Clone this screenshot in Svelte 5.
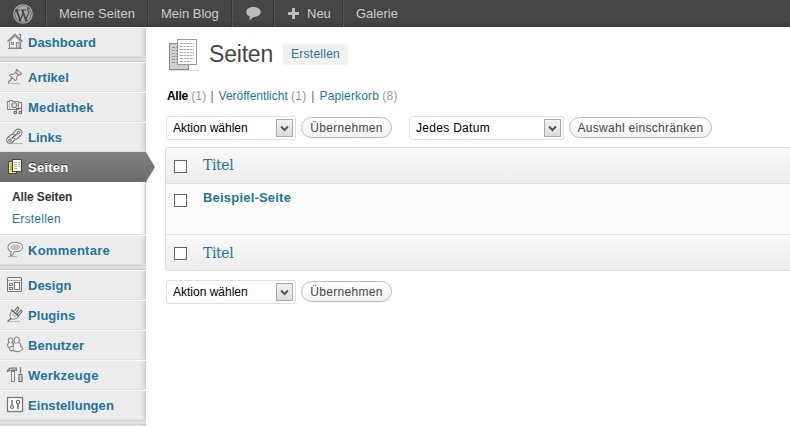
<script>
  const groups = [
    [{ id: 'home', label: 'Dashboard' }],
    [
      { id: 'pin', label: 'Artikel' },
      { id: 'media', label: 'Mediathek' },
      { id: 'link', label: 'Links' },
      { id: 'pages', label: 'Seiten', current: true, children: ['Alle Seiten', 'Erstellen'] },
      { id: 'comment', label: 'Kommentare' },
    ],
    [
      { id: 'design', label: 'Design' },
      { id: 'plug', label: 'Plugins' },
      { id: 'users', label: 'Benutzer' },
      { id: 'tools', label: 'Werkzeuge' },
      { id: 'settings', label: 'Einstellungen' },
    ],
  ];
</script>

{#snippet icon(id)}
  <svg class="icon" width="18" height="18" viewBox="0 0 18 18" fill="none" stroke="#888" stroke-width="1.1">
    {#if id === 'home'}
      <path d="M3.500 9v7h11V9L9 3.500z" fill="#f4f4f4" />
      <path d="M1.500 9.500 9 2.200l7.500 7.300M12.500 2.500h2v4" stroke="#777" />
      <path d="M3 10 9 4.200l6 5.800" stroke="#aaa" />
      <path d="M5.500 10.500h2v2h-2zM10.500 16v-5.500H13V16" />
      <path d="M2 16.500h14" />
    {:else if id === 'pin'}
      <path d="M2 16.500h12" stroke="#bbb" />
      <path d="m10.500 2.500 5 4-1 1.300-1.500-.3-2.500 2.700.3 2.300-1.500 1-5.500-5 1.200-1.300 2.500.2L10 4.800z" fill="#eee" />
      <path d="M6.200 11 2 15.500M9.500 5.500l3.500 3" stroke="#777" />
    {:else if id === 'media'}
      <path d="M1.500 4.500h2v-1h3v1h6v8h-11z" fill="#f3f3f3" />
      <circle cx="8.300" cy="8.300" r="2.500" fill="#ddd" stroke="#777" />
      <path d="M3.500 5v7" stroke="#bbb" />
      <path d="M10.500 15v-3.500h5M15.500 5.500V15M13 5.500h3" stroke="#777" />
      <circle cx="9.300" cy="15.500" r="1.300" fill="#ddd" stroke="#666" />
      <circle cx="14.300" cy="15.500" r="1.300" fill="#ddd" stroke="#666" />
    {:else if id === 'link'}
      <path d="M3 16.500h14" stroke="#bbb" />
      <g fill="#f4f4f4" stroke="#777">
        <circle cx="12.300" cy="5.700" r="3.600" />
        <circle cx="4" cy="13" r="3.300" />
        <path d="m7.500 6.500 2-2 3.500 4-2 2zM4 9.500l2-1.500 3 3.500-2.500 2.500z" stroke="none" />
        <path d="m8.900 4.500-2 2.200M14.500 8.700l-3 2.800c-1.500 1-3 .5-3.500-.5M2 10.500l3-2.800c1.500-1 3-.5 3.500.5M6.500 15.300l2.400-2.600" />
        <circle cx="12.500" cy="5.500" r="1.300" />
        <circle cx="4" cy="13.200" r="1.200" />
        <path d="m5.700 11.600 5.300-5" stroke-width="1.700" />
      </g>
    {:else if id === 'pages'}
      <path d="M2.500 4.500h8v12h-8z" fill="#eadf8c" stroke="#4b4639" />
      <path d="M4 7h2M4 9h2M4 11h2M4 13h2" stroke="#a69949" />
      <path d="M6.500 2.500h9v12h-9z" fill="#fffbe5" stroke="#4b4639" />
      <path d="M8 5.500h6M8 7.500h6M8 9.500h6M8 11.500h4" stroke="#b5ae88" stroke-dasharray="3 1" />
    {:else if id === 'comment'}
      <path d="M2 16.500h9" stroke="#bbb" />
      <path d="M9.300 2.500c-4.300 0-7.300 1.700-7.300 4.700 0 2.300 1.400 3.900 3.200 4.400L4.500 16c2-.5 3.500-2 4-4.300 5 0 8-1.500 8-4.500s-3-4.700-7.200-4.700z" fill="#fafafa" />
      <path d="M9.300 4.300c-3.300 0-5.300 1-5.300 2.900S6 10 9.300 10s5.200-1 5.200-2.800-2-2.900-5.200-2.900z" fill="#c4c4c4" stroke="none" />
    {:else if id === 'design'}
      <rect x="1.500" y="2.500" width="14" height="14" rx="1" fill="#f4f4f4" stroke="#777" />
      <path d="M2 5.500h13" stroke="#aaa" />
      <path d="M3.500 8.500h3v2h-3zM3.500 12.500h3v2h-3zM8.500 7.500h5v7h-5z" fill="#fff" stroke="#777" />
    {:else if id === 'plug'}
      <path d="M2 16.500h12" stroke="#bbb" />
      <path d="m6 5.500 6.500 6C10.500 14 7 15 5 13.500S4 8 6 5.500z" fill="#f5f5f5" />
      <path d="m5.500 4.500 7.500 7M5 13.500 1.500 16.500M8.500 6l3-4 1.500 1.200-2.700 4.200M11.300 9.200 15 5l1.200 1.500-3.500 4" stroke="#666" />
      <path d="m6.500 9 3 3" stroke="#aaa" />
    {:else if id === 'users'}
      <g fill="#f5f5f5" stroke="#808080">
        <path d="M7 12.500H3C.8 11 1.200 8.500 3.200 7.500c-1.700-1.700-.8-4.500 1.300-4.500s3.100 2.800 1.400 4.500c1.300.5 1.700 2 1.500 4z" />
        <path d="M7.500 9c0-1 .6-1.500 1-1.800C7.700 5 8.500 2 10.700 2s3.300 3 2 5.200c1.500.8 2.300 2.200 1.800 4.100 1.500.4 2.200 1.700 1.800 3.200-1.500 2.500-7 2.700-8.800.9-2.200 1-4.200.1-4-1.800s2-2.600 4-2.100c-.2-.8-.2-1.800 0-2.500z" />
      </g>
      <path d="M7.500 11.500c-.5 1.500 0 2.800 1 3.800M9 8h3.500" stroke="#aaa" />
    {:else if id === 'tools'}
      <path d="M5.500 6.500h3v10h-3z" fill="#f4f4f4" />
      <path d="M1.500 6.500C2 4 3 3 5 3h5.500v2.500H5C3.500 5.500 2.500 6 1.500 6.500z" fill="#bbb" stroke="#777" />
      <path d="M14.500 2v6.500" stroke="#777" stroke-width="1.300" />
      <path d="M13 9.500h3v7h-3z" fill="#ddd" stroke="#666" />
    {:else}
      <rect x="1.500" y="2.500" width="15" height="14" fill="#fff" stroke="#777" stroke-width="1.300" />
      <path d="M6 5v5" stroke="#777" stroke-width="1.500" />
      <circle cx="6" cy="12" r="1.500" stroke="#666" />
      <circle cx="12" cy="7" r="1.700" stroke="#666" />
      <path d="M12 9v5" stroke="#666" stroke-width="1.500" />
    {/if}
  </svg>
{/snippet}

{#snippet dropdown(label, wide)}
  <div class="select" class:wide>
    <span>{label}</span>
    <i class="arrow">
      <svg width="9" height="7" viewBox="0 0 9 7"><path d="M1 1.500 4.500 5 8 1.500" fill="none" stroke="#555" stroke-width="2" /></svg>
    </i>
  </div>
{/snippet}

<div class="page">
  <header class="adminbar">
    <div class="bar-item logo">
      <svg width="20" height="20" viewBox="0 0 20 20">
        <circle cx="10" cy="10" r="9.200" fill="none" stroke="#a9a9a9" stroke-width="1.300" />
        <circle cx="10" cy="10" r="7.900" fill="#a9a9a9" />
        <g fill="none" stroke="#464646">
          <path d="M1.800 6h4.700M8 6h5" stroke-width="1" />
          <path d="m3.500 6 4 11M9.300 6l3.900 11" stroke-width="2" />
          <path d="m7.300 16.500 3-8M12.800 16l2.700-6.500c.700-2-.9-2.800-.9-4.200 0-.8.600-1.500 1.400-1.800" stroke-width="1.200" />
        </g>
      </svg>
    </div>
    <div class="bar-item sites">Meine Seiten</div>
    <div class="bar-item blog">Mein Blog</div>
    <div class="bar-item bubble">
      <svg width="15" height="14" viewBox="0 0 15 14"><path d="M7.500 0C3.300 0 .3 2 .3 5c0 2 1.300 3.600 3.500 4.400L3.500 13.500l4-3.600c4.200 0 7.200-1.900 7.200-4.900S11.700 0 7.500 0z" fill="#bbb" /></svg>
    </div>
    <div class="bar-item new">
      <svg width="11" height="11" viewBox="0 0 11 11"><path d="M4 0h3v4h4v3H7v4H4V7H0V4h4z" fill="#bbb" /></svg>
      <span>Neu</span>
    </div>
    <div class="bar-item gallery">Galerie</div>
  </header>

  <div class="body">
    <nav class="menu">
      {#each groups as group}
        <ul class="group">
          {#each group as item}
            <li>
              <div class="item" class:current={item.current}>
                {@render icon(item.id)}
                <span class="label {item.id}">{item.label}</span>
              </div>
              {#if item.children}
                <div class="submenu">
                  {#each item.children as child, i}
                    <div><span class:active={i === 0}>{child}</span></div>
                  {/each}
                </div>
              {/if}
            </li>
          {/each}
        </ul>
        <div class="separator"></div>
      {/each}
    </nav>

    <main>
      <div class="heading">
        <svg width="32" height="34" viewBox="0 0 32 34">
          <path d="M3 32.500h28" stroke="#ddd" />
          <rect x="1.500" y="5.500" width="19" height="26" fill="#cfcfcf" stroke="#888" />
          <path d="M4 9.500h5M4 12.500h5M4 15.500h5M4 18.500h5M4 21.500h5M4 24.500h5" stroke="#999" stroke-dasharray="3 1" />
          <rect x="9.500" y="1.500" width="19" height="25" fill="#fff" stroke="#999" />
          <path d="M12 5.500h14M12 8.500h14M12 11.500h14M12 14.500h14M12 17.500h14M12 20.500h14M12 23.500h11" stroke="#aaa" stroke-dasharray="3 .7 2 .7" />
        </svg>
        <h1>Seiten</h1>
        <span class="add-new">Erstellen</span>
      </div>

      <div class="views">
        <span><b>Alle</b> <em>(1)</em></span><i>|</i><span><a>Veröffentlicht</a> <em>(1)</em></span><i>|</i><span><a class="trash">Papierkorb</a> <em>(8)</em></span>
      </div>

      <div class="tablenav">
        {@render dropdown('Aktion wählen', false)}
        <button class="apply">Übernehmen</button>
        {@render dropdown('Jedes Datum', true)}
        <button class="filter">Auswahl einschränken</button>
      </div>

      <div class="table">
        <div class="row head"><span class="check"></span><span class="col">Titel</span></div>
        <div class="row entry"><span class="check"></span><strong>Beispiel-Seite</strong></div>
        <div class="row foot"><span class="check"></span><span class="col">Titel</span></div>
      </div>

      <div class="tablenav bottom">
        {@render dropdown('Aktion wählen', false)}
        <button class="apply">Übernehmen</button>
      </div>
    </main>
  </div>
</div>

<style>
  :global(body) {
    margin: 0;
    background: #fff;
  }

  .page {
    width: 790px;
    height: 426px;
    overflow: hidden;
    font: 12px/18px "Liberation Sans", Arial, sans-serif;
    color: #333;
  }

  .page * {
    box-sizing: border-box;
  }

  .adminbar {
    display: flex;
    height: 27px;
    background: linear-gradient(#464646 0 20px, #3b3b3b);
    color: #ccc;
    font-size: 13px;
    line-height: 27px;
    white-space: nowrap;
  }

  .bar-item {
    display: flex;
    align-items: center;
    border-right: 1px solid #333;
    box-shadow: 1px 0 #555;
  }

  .logo {
    width: 46px;
    padding-left: 13px;
  }

  .sites {
    width: 102px;
    padding-left: 13px;
  }

  .blog {
    width: 84px;
    padding-left: 13px;
  }

  .bubble {
    width: 42px;
    padding-left: 14px;
  }

  .new {
    width: 69px;
    padding-left: 14px;
    gap: 8px;
  }

  .gallery {
    padding-left: 13px;
    border: 0;
    box-shadow: none;
  }

  .body {
    display: flex;
    height: 399px;
  }

  .menu {
    width: 146px;
    flex: none;
    background: #ececec;
    box-shadow: inset -1px 0 #ccc, inset -6px 0 5px -4px #ccc;
  }

  .group {
    list-style: none;
    margin: 0;
    padding: 0;
  }

  .item {
    display: flex;
    align-items: center;
    gap: 4px;
    height: 30px;
    padding-left: 6px;
    border-top: 1px solid #f9f9f9;
    border-bottom: 1px solid #dfdfdf;
    color: #21759b;
    font-size: 13px;
    font-weight: bold;
  }

  .icon {
    flex: none;
    margin-top: -2px;
  }

  .label {
    margin-top: 2px;
    letter-spacing: 0.05px;
  }

  .label.home,
  .label.link,
  .label.design {
    letter-spacing: 0;
  }

  .label.media,
  .label.pages,
  .label.comment,
  .label.tools {
    letter-spacing: 0.25px;
  }

  .current {
    position: relative;
    background: linear-gradient(#808080, #6d6d6d);
    border-color: #808080 transparent #6d6d6d;
    color: #fff;
    text-shadow: 0 -1px #333;
  }

  .current::after {
    content: "";
    position: absolute;
    left: 146px;
    top: -1px;
    width: 9px;
    height: 30px;
    background: linear-gradient(#808080, #6d6d6d);
    clip-path: polygon(0 0, 100% 50%, 0 100%);
  }

  .submenu {
    height: 53px;
    padding: 4px 0 0 12px;
    background: #fff;
    border-bottom: 1px solid #dfdfdf;
    box-shadow: inset -1px 0 #ccc, inset -6px 0 5px -4px #ddd;
    line-height: 22px;
    letter-spacing: 0.25px;
    color: #21759b;
  }

  .active {
    font-weight: bold;
    letter-spacing: -0.1px;
    color: #333;
  }

  .separator {
    height: 5px;
    background: #dfdfdf;
    border-top: 1px solid #d2d2d2;
    border-bottom: 1px solid #ccc;
  }

  main {
    flex: 1;
    padding-left: 19px;
  }

  .heading {
    display: flex;
    align-items: center;
    height: 46px;
    padding: 10px 0 0 3px;
  }

  h1 {
    margin: -3px 10px 0 9px;
    font-size: 23px;
    font-weight: normal;
    line-height: 34px;
    letter-spacing: -0.2px;
    color: #464646;
  }

  .add-new {
    width: 65px;
    height: 21px;
    margin-top: -1px;
    border-radius: 3px;
    background: #f1f1f1;
    color: #21759b;
    line-height: 21px;
    letter-spacing: 0.25px;
    text-align: center;
  }

  .views {
    display: flex;
    padding: 14px 0 0 2px;
    color: #21759b;
  }

  .views b {
    letter-spacing: -0.3px;
    color: #000;
  }

  .views .trash {
    letter-spacing: 0.15px;
  }

  .views em {
    color: #999;
    font-style: normal;
    letter-spacing: 0.2px;
  }

  .views i {
    margin: 0 5px 0 4px;
    color: #666;
    font-style: normal;
  }

  .views i:nth-of-type(2) {
    margin-left: 5px;
  }

  .tablenav {
    display: flex;
    align-items: center;
    height: 24px;
    margin: 11px 0 0 1px;
  }

  .select {
    display: flex;
    align-items: center;
    justify-content: space-between;
    width: 130px;
    height: 24px;
    padding: 0 2px 0 6px;
    border: 1px solid #dfdfdf;
    border-radius: 3px;
    color: #000;
  }

  .wide {
    width: 155px;
    margin-left: 17px;
    letter-spacing: 0.3px;
  }

  .arrow {
    display: flex;
    align-items: center;
    justify-content: center;
    width: 17px;
    height: 18px;
    border: 1px solid #aaa;
    background: linear-gradient(#f2f2f2, #dcdcdc);
  }

  button {
    height: 21px;
    margin: -1px 0 0 5px;
    padding: 0;
    border: 1px solid #bbb;
    border-radius: 11px;
    background: linear-gradient(#fff, #f2f2f2);
    color: #464646;
    font: 12px/18px "Liberation Sans", Arial, sans-serif;
    letter-spacing: 0.3px;
  }

  .apply {
    width: 91px;
  }

  .filter {
    width: 143px;
  }

  .table {
    height: 124px;
    margin-top: 7px;
    border: 1px solid #dfdfdf;
    border-right: 0;
    border-radius: 3px 0 0 3px;
    overflow: hidden;
  }

  .row {
    display: flex;
    align-items: center;
    padding-left: 8px;
  }

  .head,
  .foot {
    height: 36px;
    background: linear-gradient(#f9f9f9, #ececec);
  }

  .head {
    border-bottom: 1px solid #dfdfdf;
  }

  .entry {
    height: 51px;
    align-items: flex-start;
    padding-top: 5px;
    background: #fcfcfc;
    border-bottom: 1px solid #dfdfdf;
  }

  .check {
    width: 13px;
    height: 13px;
    margin: 2px 16px 0 0;
    border: 1px solid #666;
    background: #fff;
  }

  .entry .check {
    margin-top: 5px;
  }

  .foot .check {
    margin-top: 0;
  }

  .col {
    margin-top: -1px;
    color: #21759b;
    font: 14px/20px "DejaVu Serif", Georgia, serif;
    letter-spacing: -0.4px;
  }

  strong {
    color: #21759b;
    font-size: 13px;
    letter-spacing: 0.2px;
  }

  .bottom {
    margin-top: 9px;
  }
</style>
